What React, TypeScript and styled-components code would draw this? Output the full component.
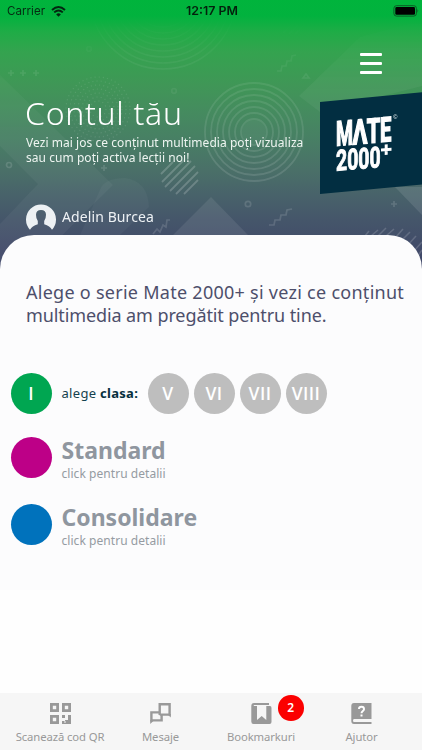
import React from 'react';
import styled, { createGlobalStyle } from 'styled-components';

const Global = createGlobalStyle`
  * { box-sizing: border-box; }
  body { margin: 0; background: #fff; font-family: 'Noto Sans', 'Open Sans', sans-serif; }
  h1, h2, p { margin: 0; font-weight: 400; }
  button { border: 0; padding: 0; background: none; font: inherit; color: inherit; }
`;

const Screen = styled.div`
  width: 100%;
  height: 750px;
  display: flex;
  flex-direction: column;
  overflow: hidden;
  background: #fefefe;
`;

const Header = styled.header`
  position: relative;
  height: 275px;
  margin-bottom: -40px;
  flex: none;
  display: flex;
  flex-direction: column;
  background: linear-gradient(#00b43c 0, #02b23e 16px, #1fac46 32px, #34a34f 52px, #409657 86px, #458b5f 112px, #487d65 144px, #4a7068 170px, #48626a 195px, #45566a 220px, #414a69 250px, #3f4668 275px);
`;

const Pattern = styled.svg`
  position: absolute;
  inset: 0;
  width: 422px;
  height: 275px;
  mask-image: linear-gradient(transparent 15px, rgba(0, 0, 0, 0.55) 80px, rgba(0, 0, 0, 0.8) 170px);
`;

const StatusBar = styled.div`
  position: relative;
  height: 22px;
  flex: none;
  display: grid;
  grid-template-columns: 1fr auto 1fr;
  align-items: center;
  padding: 0 4px 0 7px;
  font: 400 11.6px/22px Inter, sans-serif;
  color: #062b12;
`;

const Carrier = styled.span`
  display: flex;
  align-items: center;
  gap: 6px;
`;

const Clock = styled.span`
  font-weight: 600;
  font-size: 12.4px;
  color: #04200d;
  margin-right: 1px;
`;

const Battery = styled.svg`
  justify-self: end;
  display: block;
  margin-right: -1px;
`;

const MenuRow = styled.div`
  position: relative;
  display: flex;
  justify-content: flex-end;
  padding: 31px 40.5px 0 0;
`;

const MenuButton = styled.button`
  width: 21.5px;
  height: 21px;
  display: flex;
  flex-direction: column;
  justify-content: space-between;
`;

const MenuBar = styled.span`
  width: 21.5px;
  height: 3px;
  border-radius: 1px;
  background: #fff;
`;

const Hero = styled.div`
  position: relative;
  display: flex;
  justify-content: space-between;
  height: 120px;
  margin-top: 18px;
  padding-left: 26px;
  color: #fff;
`;

const Intro = styled.div`
  width: 290px;
  margin-top: -1px;
`;

const Title = styled.h1`
  margin-left: -1px;
  font-size: 32px;
  line-height: 44px;
  font-weight: 300;
  letter-spacing: 0.7px;
`;

const Lead = styled.p`
  font-size: 12px;
  line-height: 15px;
  letter-spacing: 0.05px;
  white-space: nowrap;
  color: #eef5f1;
`;

const Logo = styled.svg`
  flex: none;
  width: 102px;
  height: 102px;
`;

const Account = styled.div`
  position: relative;
  display: flex;
  align-items: flex-start;
  gap: 6px;
  margin: -8px 0 0 26px;
  font-size: 14px;
  line-height: 25px;
  letter-spacing: 0.1px;
  color: #edf1f4;
`;

const Panel = styled.main`
  position: relative;
  flex: none;
  height: 355px;
  padding-top: 46px;
  background: #fcfcfd;
  border-radius: 34px 34px 0 0;
`;

const Prompt = styled.h2`
  margin-left: 26px;
  font-size: 18px;
  line-height: 23px;
  color: #4d4f6b;
`;

const PromptLine = styled.span<{ $spacing: number }>`
  display: block;
  white-space: nowrap;
  letter-spacing: ${(p) => p.$spacing}px;
`;

const SeriesList = styled.div`
  display: flex;
  flex-direction: column;
  padding: 46px 0 0 10.5px;
`;

const Series = styled.div<{ $gap: number }>`
  display: flex;
  align-items: center;
  height: 41px;
  margin-bottom: ${(p) => p.$gap}px;
`;

const Disc = styled.button<{ $color: string }>`
  width: 41px;
  height: 41px;
  flex: none;
  display: grid;
  place-items: center;
  border-radius: 50%;
  background: ${(p) => p.$color};
  color: #fff;
  font: 600 17.5px/41px 'Open Sans', sans-serif;
  letter-spacing: 0.4px;
`;

const ClassLabel = styled.span`
  width: 96px;
  margin-top: -1px;
  padding-left: 10px;
  font-size: 13px;
  letter-spacing: 0.3px;
  white-space: nowrap;
  color: #14414e;
  b { color: #062f3d; }
`;

const ClassList = styled.div`
  display: flex;
  gap: 5px;
`;

const SeriesText = styled.div`
  padding-left: 10px;
  margin-top: 3px;
`;

const SeriesName = styled.div`
  font-size: 23px;
  line-height: 30px;
  font-weight: 700;
  color: #8f969f;
`;

const SeriesHint = styled.div`
  font-size: 12px;
  line-height: 18px;
  letter-spacing: 0.05px;
  color: #959ba2;
`;

const TabBar = styled.nav`
  margin-top: auto;
  height: 57px;
  flex: none;
  display: grid;
  grid-template-columns: 120px 81px 120px 81px;
  background: #f6f6f6;
  color: #999;
`;

const Tab = styled.button`
  position: relative;
  display: flex;
  flex-direction: column;
  align-items: center;
  padding-top: 10px;
  font-size: 11.3px;
  line-height: 16px;
  letter-spacing: -0.1px;
  white-space: nowrap;
  svg { width: 21px; height: 21px; margin-bottom: 5px; }
`;

const Badge = styled.span`
  position: absolute;
  left: 77px;
  top: 2px;
  width: 25.5px;
  height: 25.5px;
  border-radius: 50%;
  background: #fb0000;
  color: #fff;
  font-size: 12px;
  font-weight: 600;
  line-height: 25px;
  text-align: center;
`;

const arcs = [13, 19, 25, 31, 37, 43, 49];
const topArcs = [31, 37, 43, 49, 55, 61, 67, 73];

function HeaderPattern() {
  return (
    <Pattern viewBox="0 0 422 275" fill="none" stroke="#fff" aria-hidden="true">
      <g fill="#fff" stroke="none">
        <path d="M0 75L113 185L22 275H0V224L38 184L0 146Z" opacity=".055" />
        <path d="M299 96L360 37L422 20V86L320 112Z" opacity=".08" />
        <path d="M173 235L211 197L248 235Z" opacity=".1" />
        <path d="M395 187H422V215Z" opacity=".13" />
        <path d="M100 190Q104 178 125 178Q148 181 149 207L120 235H80Z" opacity=".045" />
      </g>
      <g strokeWidth="1.5" opacity=".13">
        {topArcs.map((r) => <circle key={r} cx="163" cy="-4" r={r} />)}
      </g>
      <g strokeWidth="1.8" opacity=".15">
        {arcs.map((r) => <circle key={r} cx="254" cy="132" r={r} />)}
      </g>
      <circle cx="254" cy="132" r="12" fill="#fff" stroke="none" opacity=".06" />
      <g strokeWidth="1.2" strokeDasharray="1.2 3" opacity=".17">
        {[8, 12, 16, 20, 24, 28, 32].map((r) => <circle key={r} cx="98" cy="109" r={r} />)}
      </g>
      <path d="M161 174L173 162M162 182L184 160M165 187L191 161M170 191L195 166M176 194L198 172M184 194L198 180" strokeWidth="1.8" opacity=".24" />
      <g strokeWidth="1.7" opacity=".17">
        <circle cx="9" cy="165" r="2.5" /><circle cx="248" cy="204" r="2.7" />
        <circle cx="89" cy="49" r="2.3" opacity=".6" /><circle cx="174" cy="91" r="2.3" opacity=".6" />
        <path d="M8 73H14M11 70V76M20 73H26M23 70V76M33 73H39M36 70V76M101 168H107M104 165V171M391 204H397M394 201V207" />
        <path d="M269 225L274 225L275 220L280 220L281 215L286 215L287 210L292 209" />
        <path d="M153 234L157 229L160 232L163 225L166 227L167 220L170 220" />
        <path d="M277 71L281 71L282 66L286 66L287 61L291 61L292 56L296 55M303 78L306 74L309 78Z" opacity=".8" />
        <path d="M283 33L300 16M289 34L306 17M295 34L312 17" opacity=".45" />
      </g>
      <path d="M365 236L369 231M371 236L378 230M378 236L386 228M386 236L394 229M395 238L403 229M401 241L410 232M407 246L416 236M413 252L422 242M417 257L422 250" strokeWidth="1.6" opacity=".2" />
    </Pattern>
  );
}

function WifiIcon() {
  return (
    <svg width="15" height="11" viewBox="0 0 15 11" fill="none" stroke="#032610" strokeWidth="1.9">
      <path d="M1 4Q7.5-2 14 4M3.2 6.4Q7.5 2.4 11.8 6.4" />
      <path d="M5.2 8.4Q7.5 6.2 9.8 8.4L7.5 10.7Z" fill="#032610" stroke="none" />
    </svg>
  );
}

function BatteryIcon() {
  return (
    <Battery width="26" height="12" viewBox="0 0 26 12">
      <rect x=".9" y=".7" width="22.5" height="10.4" rx="2.6" fill="none" stroke="#0b5a26" />
      <rect x="2.3" y="2.1" width="19.7" height="7.6" rx="1.3" fill="#000" />
      <path d="M24.5 4Q26 5.8 24.5 7.7Z" fill="#0b5a26" />
    </Battery>
  );
}

function MateLogo() {
  return (
    <Logo viewBox="320 92 102 102" role="img" aria-label="MATE 2000+">
      <path d="M320 102L422 92.2V184.5L320 194Z" fill="#022e41" />
      <g transform="translate(336.5 0) skewY(-5)" fill="#fff" stroke="#fff" fontFamily="Roboto, sans-serif" fontWeight="700">
        <g transform="translate(0 145.8) scale(1 1.7)" fontSize="20" strokeWidth=".9">
          <text x="-.4" y="0" textLength="17" lengthAdjust="spacingAndGlyphs">M</text>
          <text x="16" y="0" textLength="15" lengthAdjust="spacingAndGlyphs">Λ</text>
          <text x="30.3" y="0" textLength="13.5" lengthAdjust="spacingAndGlyphs">T</text>
          <text x="43.6" y="0" textLength="11.4" lengthAdjust="spacingAndGlyphs">E</text>
        </g>
        <g transform="translate(0 170.8) scale(1 1.44)" fontSize="20" strokeWidth=".7">
          <text x="-.4" y="0" textLength="44.5" lengthAdjust="spacingAndGlyphs">2000</text>
        </g>
        <path d="M44.5 154H55M49.7 148.8V159.3" strokeWidth="3" />
      </g>
      <text x="393" y="119" fontSize="5.5" fill="#dce5e8" fontFamily="Noto Sans, sans-serif">©</text>
    </Logo>
  );
}

function Avatar() {
  return (
    <svg width="30" height="27" viewBox="0 0 30 27">
      <path d="M4 25.8A15 15 0 1 1 26 25.8Q24 22 18.2 20.2V17Q20 14.8 20 10.8Q20 6 15 6T10 10.8Q10 14.8 11.8 17V20.2Q6 22 4 25.8Z" fill="#edf1f4" />
    </svg>
  );
}

function QrIcon() {
  return (
    <svg viewBox="0 0 21 21" fill="none" stroke="currentColor" strokeWidth="2.8">
      <path d="M1.4 1.4H7.6V7.6H1.4ZM13.4 1.4H19.6V7.6H13.4ZM1.4 13.4H7.6V19.6H1.4Z" />
      <path d="M12 12H15V15H12ZM18 12H21V21H12V18H15V17H18Z" fill="currentColor" stroke="none" />
      <path d="M14 19H16" stroke="#f6f6f6" strokeWidth="1" />
    </svg>
  );
}

function MessagesIcon() {
  return (
    <svg viewBox="0 0 21 21" fill="none" stroke="currentColor" strokeWidth="2.4">
      <path d="M9.7 12V1.3H19.6V11.6H9.7M9.7 9.4H1.4V17.4H11.6V11" />
      <path d="M.2 21V17H4.4ZM20.8 14.5V11H17Z" fill="currentColor" stroke="none" />
    </svg>
  );
}

function BookmarkIcon() {
  return (
    <svg viewBox="0 0 21 21">
      <path d="M3 0H18V2H3.2Q2 2.6 3.2 3.1H19Q20.5 3.1 20.5 5V19Q20.5 21 18.5 21H2.5Q.3 21 .3 18.5V3Q.3 0 3 0Z" fill="currentColor" />
      <path d="M6 3H15.3V17L10.7 13L6 17Z" fill="#f6f6f6" />
    </svg>
  );
}

function HelpIcon() {
  return (
    <svg viewBox="0 0 21 21">
      <path d="M3 0H20.5V16H3Q2 16 2 17.6T3 19H20.5V21H3Q.3 21 .3 18V3Q.3 0 3 0Z" fill="currentColor" />
      <path d="M8 6Q8 3.8 10.5 3.8T13 6.2C13 8 10.5 8 10.5 10.2M10.5 11.4V13.6" fill="none" stroke="#fff" strokeWidth="2" />
    </svg>
  );
}

const classes = ['V', 'VI', 'VII', 'VIII'];

export default function App() {
  return (
    <Screen>
      <Global />
      <Header>
        <HeaderPattern />
        <StatusBar>
          <Carrier>Carrier <WifiIcon /></Carrier>
          <Clock>12:17 PM</Clock>
          <BatteryIcon />
        </StatusBar>
        <MenuRow>
          <MenuButton aria-label="Meniu"><MenuBar /><MenuBar /><MenuBar /></MenuButton>
        </MenuRow>
        <Hero>
          <Intro>
            <Title>Contul tău</Title>
            <Lead>Vezi mai jos ce conținut multimedia poți vizualiza<br />sau cum poți activa lecții noi!</Lead>
          </Intro>
          <MateLogo />
        </Hero>
        <Account><Avatar />Adelin Burcea</Account>
      </Header>
      <Panel>
        <Prompt>
          <PromptLine $spacing={0.27}>Alege o serie Mate 2000+ și vezi ce conținut</PromptLine>
          <PromptLine $spacing={-0.1}>multimedia am pregătit pentru tine.</PromptLine>
        </Prompt>
        <SeriesList>
          <Series $gap={23}>
            <Disc $color="#00a651">I</Disc>
            <ClassLabel>alege <b>clasa:</b></ClassLabel>
            <ClassList>
              {classes.map((name) => <Disc key={name} $color="#bebebe">{name}</Disc>)}
            </ClassList>
          </Series>
          <Series $gap={26}>
            <Disc $color="#bd0087" aria-label="Standard" />
            <SeriesText>
              <SeriesName>Standard</SeriesName>
              <SeriesHint>click pentru detalii</SeriesHint>
            </SeriesText>
          </Series>
          <Series $gap={0}>
            <Disc $color="#0072bc" aria-label="Consolidare" />
            <SeriesText>
              <SeriesName>Consolidare</SeriesName>
              <SeriesHint>click pentru detalii</SeriesHint>
            </SeriesText>
          </Series>
        </SeriesList>
      </Panel>
      <TabBar>
        <Tab><QrIcon />Scanează cod QR</Tab>
        <Tab><MessagesIcon />Mesaje</Tab>
        <Tab><BookmarkIcon />Bookmarkuri<Badge>2</Badge></Tab>
        <Tab><HelpIcon />Ajutor</Tab>
      </TabBar>
    </Screen>
  );
}
